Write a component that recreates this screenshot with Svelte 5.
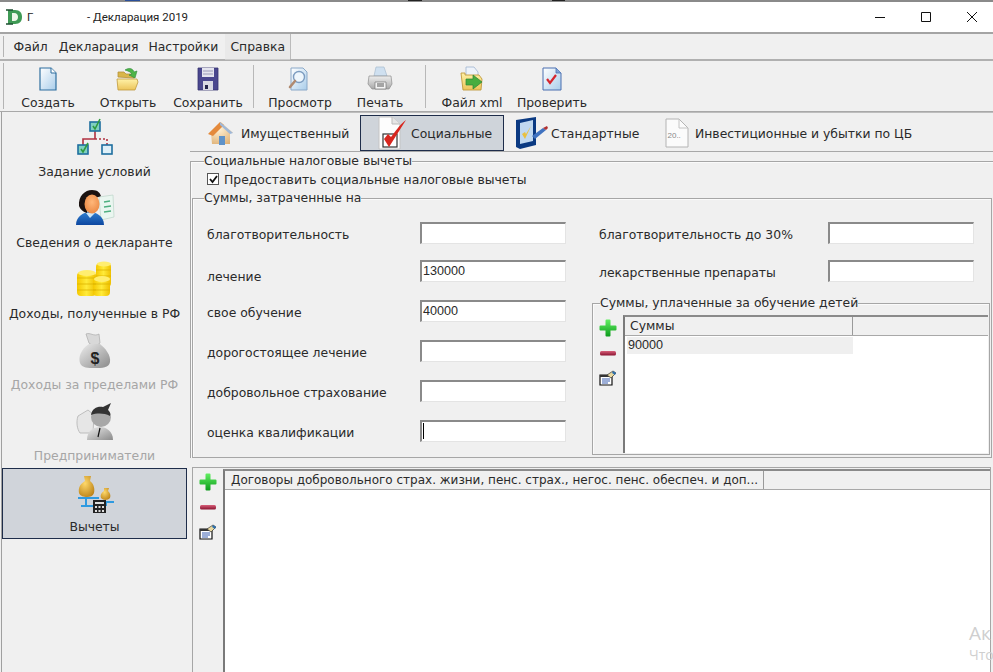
<script>
  const toolA = [{ l: 'Создать', i: 'create' }, { l: 'Открыть', i: 'open' }, { l: 'Сохранить', i: 'save' }];
  const toolB = [{ l: 'Просмотр', i: 'preview' }, { l: 'Печать', i: 'print' }];
  const toolC = [{ l: 'Файл xml', i: 'xml' }, { l: 'Проверить', i: 'check' }];
  const side = [
    { l: 'Задание условий', i: 'tree' },
    { l: 'Сведения о декларанте', i: 'person' },
    { l: 'Доходы, полученные в РФ', i: 'coins' },
    { l: 'Доходы за пределами РФ', i: 'bag', off: true },
    { l: 'Предприниматели', i: 'biz', off: true },
    { l: 'Вычеты', i: 'scales', sel: true }
  ];
  const left = [
    { l: 'благотворительность', v: '' },
    { l: 'лечение', v: '130000', low: true },
    { l: 'свое обучение', v: '40000' },
    { l: 'дорогостоящее лечение', v: '' },
    { l: 'добровольное страхование', v: '' },
    { l: 'оценка квалификации', v: '', caret: true }
  ];
</script>

{#snippet tool(t)}
  <div class="tool">
    <svg width="32" height="26" viewBox="0 0 32 26">{@render icon(t.i)}</svg>
    <span>{t.l}</span>
  </div>
{/snippet}

{#snippet icon(n)}
  {#if n === 'create'}
    <path d="M8 2h11l5 5v17H8z" fill="url(#gPage)" stroke="#2f6f9f" stroke-width="1.2"/>
    <path d="M19 2v5h5" fill="#fff" stroke="#2f6f9f"/>
  {:else if n === 'open'}
    <path d="M6 11V6h6l2 2h8v4z" fill="#d9b64a" stroke="#b5923a" stroke-width=".8"/>
    <path d="M6 24l-1-11h20l1 3-3 8z" fill="url(#gFolder)" stroke="#c09a3c" stroke-width=".8"/>
    <path d="M13 4c5-3 8-1 9 2l3-1-2 7-6-3 3-1c-1-2-4-3-7-4z" fill="#4fb548" stroke="#2d8a3a" stroke-width=".6"/>
  {:else if n === 'save'}
    <path d="M6 2h20v22H6z" fill="#4a478f" stroke="#35336e" stroke-width=".8"/>
    <path d="M10 2h12v9H10z" fill="#e4e4ee"/>
    <path d="M11 5h10M11 8h10" stroke="#9a9ab8"/>
    <path d="M11 15h10v9H11z" fill="#d8d8e4"/>
    <path d="M13 19h3v4h-3z" fill="#23234a"/>
  {:else if n === 'preview'}
    <path d="M7 2h12l4 4v18H7z" fill="url(#gPage)" stroke="#8aa8c8"/>
    <circle cx="15" cy="11" r="5.500" fill="#eef6fc" stroke="#7c9cc0" stroke-width="1.400"/>
    <path d="M11 15l-5 6" stroke="#b08a70" stroke-width="2.600" stroke-linecap="round"/>
  {:else if n === 'print'}
    <path d="M10 10l2-9h8l3 9z" fill="#cfe0f0" stroke="#a8bccf" stroke-width=".7"/>
    <path d="M5 10h22l1 8-3 5H8l-4-5z" fill="url(#gGray)" stroke="#8c8c8c" stroke-width=".7"/>
    <path d="M11 16h11v7H11z" fill="#f4f4f4" stroke="#777" stroke-width=".7"/>
    <path d="M13 18h7M13 20h7" stroke="#555"/>
  {:else if n === 'xml'}
    <path d="M10 1h8l4 5v8H10z" fill="#eef3fa" stroke="#9fb4cf" stroke-width=".8"/>
    <path d="M5 7h4v2h14l3 4-1 11H7z" fill="url(#gFolder)" stroke="#c09a3c" stroke-width=".9"/>
    <path d="M10 13h7v-4l9 7-9 7v-4h-7z" fill="#47ad3f" stroke="#2b8436" stroke-width=".7"/>
  {:else if n === 'check'}
    <path d="M7 2h13l5 5v17H7z" fill="url(#gPage)" stroke="#4a6fb0" stroke-width="1"/>
    <path d="M20 2v5h5" fill="#7fa2d8" stroke="#4a6fb0" stroke-width=".8"/>
    <path d="M11 13l3 4 6-8" fill="none" stroke="#d6262e" stroke-width="2.200"/>
  {/if}
{/snippet}

{#snippet actions()}
  <div class="actions">
    <svg width="18" height="18" viewBox="0 0 18 18"><path d="M6.500 1.500q0-1 1-1h3q1 0 1 1v5h5q1 0 1 1v3q0 1-1 1h-5v5q0 1-1 1h-3q-1 0-1-1v-5h-5q-1 0-1-1v-3q0-1 1-1h5z" fill="url(#gPlus)"/></svg>
    <svg width="18" height="18" viewBox="0 0 18 18"><rect x="1" y="7" width="16" height="4.500" rx="1.500" fill="url(#gMinus)"/></svg>
    <svg width="18" height="18" viewBox="0 0 18 18">
      <path d="M1 6h12v10H1z" fill="#fff" stroke="#111" stroke-width="1.200"/>
      <path d="M1 6h12v2H1z" fill="#333"/>
      <path d="M3 10h8M3 12h8M3 14h6" stroke="#3a5fb0"/>
      <path d="M8 6l6-4 3 2-5 5z" fill="#e9d9a0" stroke="#333" stroke-width=".7"/>
      <path d="M14 2l3 2-1 2-3-2z" fill="#2c6fae"/>
    </svg>
  </div>
{/snippet}

<div class="win">
  <svg class="defs" width="0" height="0">
    <defs>
      <linearGradient id="gPage" x1="0" y1="0" x2="1" y2="1"><stop offset="0" stop-color="#ffffff"/><stop offset="1" stop-color="#a9cdea"/></linearGradient>
      <linearGradient id="gFolder" x1="0" y1="0" x2="0" y2="1"><stop offset="0" stop-color="#fff2a8"/><stop offset="1" stop-color="#ecc45a"/></linearGradient>
      <linearGradient id="gGray" x1="0" y1="0" x2="0" y2="1"><stop offset="0" stop-color="#eeeeee"/><stop offset="1" stop-color="#a8a8a8"/></linearGradient>
      <linearGradient id="gPlus" x1="0" y1="0" x2="0" y2="1"><stop offset="0" stop-color="#62f062"/><stop offset="1" stop-color="#0c9a1c"/></linearGradient>
      <linearGradient id="gMinus" x1="0" y1="0" x2="0" y2="1"><stop offset="0" stop-color="#d8607a"/><stop offset="1" stop-color="#8a1230"/></linearGradient>
      <linearGradient id="gCoin" x1="0" y1="0" x2="1" y2="0"><stop offset="0" stop-color="#f5c800"/><stop offset=".5" stop-color="#ffeb3a"/><stop offset="1" stop-color="#efc000"/></linearGradient>
      <linearGradient id="gBlue" x1="0" y1="0" x2="0" y2="1"><stop offset="0" stop-color="#2f7fd0"/><stop offset="1" stop-color="#0d47a0"/></linearGradient>
      <linearGradient id="gBagG" x1="0" y1="0" x2="1" y2="1"><stop offset="0" stop-color="#ededed"/><stop offset="1" stop-color="#8a8a8a"/></linearGradient>
      <radialGradient id="gGold" cx=".4" cy=".35" r=".8"><stop offset="0" stop-color="#ffd96a"/><stop offset="1" stop-color="#b5790f"/></radialGradient>
      <radialGradient id="gFace" cx=".5" cy=".4" r=".7"><stop offset="0" stop-color="#ffb77a"/><stop offset="1" stop-color="#e8823c"/></radialGradient>
      <radialGradient id="gHouse" cx=".4" cy=".3" r=".9"><stop offset="0" stop-color="#fff3d8"/><stop offset="1" stop-color="#dba868"/></radialGradient>
    </defs>
  </svg>

  <header class="title">
    <svg class="logo" width="18" height="18" viewBox="0 0 18 18">
      <path d="M3 2h7c5 0 7 3 7 7s-2 7-7 7H3z" fill="#3f9a55"/>
      <path d="M7 5h2c3 0 4 2 4 4s-1 4-4 4H7z" fill="#eef6e8"/>
      <path d="M1 2h7M1 16h7" stroke="#1c4f30" stroke-width="1.500"/>
    </svg>
    <span class="t1">Г</span>
    <span class="t2">- Декларация 2019</span>
    <div class="ctl">
      <svg width="12" height="12" viewBox="0 0 12 12"><path d="M1 6.500h10" stroke="#111"/></svg>
      <svg width="12" height="12" viewBox="0 0 12 12"><path d="M1.500 1.500h9v9h-9z" fill="none" stroke="#111"/></svg>
      <svg width="12" height="12" viewBox="0 0 12 12"><path d="M1 1l10 10M11 1L1 11" stroke="#111"/></svg>
    </div>
  </header>

  <nav class="menu">
    <i class="grip"></i>
    <span>Файл</span><span>Декларация</span><span>Настройки</span><span class="hot">Справка</span>
  </nav>

  <div class="toolbar">
    <i class="grip"></i>
    {#each toolA as t}{@render tool(t)}{/each}
    <i class="sep"></i>
    {#each toolB as t}{@render tool(t)}{/each}
    <i class="sep"></i>
    {#each toolC as t}{@render tool(t)}{/each}
  </div>

  <div class="body">
    <aside class="side">
      {#each side as s}
        <div class="item" class:sel={s.sel} class:off={s.off}>
          <svg width="40" height="40" viewBox="0 0 40 40">
            {#if s.i === 'tree'}
              <path d="M20 13v8M8 27v-6h12" fill="none" stroke="#b03040" stroke-width="1.600"/>
              <path d="M20 21h12v6" fill="none" stroke="#b03040" stroke-width="1.600" stroke-dasharray="2 2"/>
              <rect x="15" y="4" width="10" height="9" fill="#7fd0c0" stroke="#1f6f9f" stroke-width="1.600"/>
              <rect x="3" y="27" width="10" height="9" fill="#7fd0c0" stroke="#1f6f9f" stroke-width="1.600"/>
              <rect x="27" y="27" width="10" height="9" fill="#dff0f8" stroke="#1f6f9f" stroke-width="1.600"/>
              <path d="M18 8l2 3 5-10" fill="none" stroke="#2f9a3f" stroke-width="1.600"/>
              <path d="M6 31l2 3 5-9" fill="none" stroke="#2f9a3f" stroke-width="1.600"/>
            {:else if s.i === 'person'}
              <path d="M24 8l14-2 1 22-13 3z" fill="#eaf6f0" stroke="#bcd4c8" stroke-width=".7"/>
              <path d="M29 13l6-1M29 18l7-1M29 23l7-1" stroke="#4fb080" stroke-width="1.400"/>
              <path d="M1 36c0-9 8-13 14-13s14 4 14 13z" fill="url(#gBlue)"/>
              <path d="M11 24l4 5 5-5z" fill="#cfe6f5"/>
              <path d="M4 17C3 7 10 1 17 1c6 0 8 3 9 6-4 2-8 2-11 1l-3 16c-4-1-7-4-8-7z" fill="#1b1210"/>
              <ellipse cx="17" cy="15" rx="7.500" ry="9.500" fill="url(#gFace)"/>
            {:else if s.i === 'coins'}
              <rect x="2" y="12" width="19" height="24" rx="4" fill="url(#gCoin)"/>
              <rect x="21" y="3" width="15" height="24" rx="4" fill="url(#gCoin)"/>
              <rect x="18" y="18" width="17" height="18" rx="4" fill="url(#gCoin)"/>
              <path d="M2 18h19M2 24h19M2 30h19M21 10h15M21 16h15M18 24h17M18 30h17" stroke="#dcb400" stroke-width=".8"/>
              <ellipse cx="12" cy="13" rx="9" ry="3" fill="#ffee70"/><ellipse cx="29" cy="4" rx="7" ry="2.500" fill="#ffee70"/><ellipse cx="27" cy="19" rx="8" ry="3" fill="#ffee70"/>
            {:else if s.i === 'bag'}
              <path d="M11 3c4-2 8 3 13 0l1 9c-3 3-8 3-11 0z" fill="#d8d8d8" stroke="#aaa" stroke-width=".7"/>
              <path d="M14 13c-8 5-11 13-9 19 2 5 8 5 15 5s14 0 15-6c1-7-5-14-10-18z" fill="url(#gBagG)"/>
              <text x="20" y="33" text-anchor="middle" font-family="Liberation Sans" font-weight="700" font-size="16" fill="#222">$</text>
            {:else if s.i === 'biz'}
              <path d="M3 14l10-6 6 5-1 18H5c-3-4-4-11-2-17z" fill="#e6e6e6" stroke="#aaa" stroke-width=".7"/>
              <path d="M12 38c0-10 7-13 13-13s13 4 13 13z" fill="url(#gBagG)"/>
              <path d="M25 26l-2 9" stroke="#111" stroke-width="1.200"/>
              <circle cx="26" cy="15" r="10" fill="#a8a8a8"/>
              <path d="M16 13c1-7 7-9 12-8l8-4-3 7c2 2 3 4 2 6-6-3-13-3-19-1z" fill="#333"/>
            {:else}
              <path d="M9 3h7l-1 5c4 3 5 8 4 12-1 3-4 4-7 4s-7-1-8-4c-1-5 1-9 6-12z" fill="url(#gGold)"/>
              <path d="M29 15h5l-1 3c2 2 3 4 2 7-1 1-3 2-4.500 2S27 26 26 25c-1-3 0-5 3-7z" fill="url(#gGold)"/>
              <path d="M3 25h21M22 29h17M11 25v8M6 33h12M31 28v5" fill="none" stroke="#2f9ae0" stroke-width="2"/>
              <rect x="18" y="27" width="13" height="14" fill="#222" />
              <path d="M20 29h9v2h-9zM20 33h2v2h-2zM23.500 33h2v2h-2zM27 33h2v2h-2zM20 37h2v2h-2zM23.500 37h2v2h-2zM27 37h2v2h-2z" fill="#ddd"/>
            {/if}
          </svg>
          <span>{s.l}</span>
        </div>
      {/each}
    </aside>

    <main class="main">
      <div class="tabs">
        <div class="tab house">
          <svg width="30" height="30" viewBox="0 0 30 30">
            <path d="M5 15l-2 0L15 4l12 11h-3v11H6z" fill="url(#gHouse)"/>
            <path d="M2 16L14 4l4 3-11 11z" fill="#e48a3c"/>
            <path d="M14 4l13 11-3 1-10-9z" fill="#9fb8d8"/>
            <path d="M13 18h6v9h-6z" fill="#5f92c8"/>
          </svg>
          <span>Имущественный</span>
        </div>
        <div class="tab soc on">
          <svg width="38" height="34" viewBox="0 0 38 34">
            <path d="M6 1h13l8 7v25H6z" fill="#fdfdfd" stroke="#c4c4c4"/>
            <path d="M19 1v7h8" fill="#e6e6e6" stroke="#bbb"/>
            <rect x="10" y="18" width="14" height="13" fill="#fff" stroke="#333" stroke-width="1.200"/>
            <path d="M11 23l5 8L33 4c-6 4-11 12-15 17l-3-3z" fill="#d8271f"/>
          </svg>
          <span>Социальные</span>
        </div>
        <div class="tab std">
          <svg width="34" height="34" viewBox="0 0 34 34">
            <path d="M1 4l20-3v28L5 33l-4-2z" fill="#0b3a82"/>
            <path d="M5 7l13-3v21L5 28z" fill="#c0d8f0"/>
            <path d="M7 18l3 5 6-13-5 8-1-2z" fill="#e8c040"/>
            <path d="M17 20l11-8 3 2-11 9z" fill="#3f72c0"/>
            <path d="M28 12l4-2 1 2-2 2z" fill="#b03030"/>
          </svg>
          <span>Стандартные</span>
        </div>
        <div class="tab inv">
          <svg width="24" height="30" viewBox="0 0 24 30">
            <path d="M1 1h13l9 9v19H1z" fill="#fbfbfb" stroke="#b4b4b4"/>
            <path d="M14 1v9h9" fill="none" stroke="#c4c4c4"/>
            <text x="2.500" y="20" font-family="Liberation Sans" font-size="8" fill="#888">20..</text>
          </svg>
          <span>Инвестиционные и убытки по ЦБ</span>
        </div>
      </div>

      <fieldset class="social">
        <legend>Социальные налоговые вычеты</legend>
        <label class="chk">
          <span class="box"><svg width="9" height="9" viewBox="0 0 9 9"><path d="M1 4l2.500 3L8 1" fill="none" stroke="#111" stroke-width="1.800"/></svg></span>
          Предоставить социальные налоговые вычеты
        </label>

        <fieldset class="sums">
          <legend>Суммы, затраченные на</legend>
          <div class="cols">
            <div class="col-l">
              {#each left as f}
                <div class="row" class:low={f.low}>
                  <span class="lab">{f.l}</span>
                  <div class="inp">{f.v}{#if f.caret}<b class="caret"></b>{/if}</div>
                </div>
              {/each}
            </div>
            <div class="col-r">
              <div class="row r"><span class="lab">благотворительность до 30%</span><div class="inp"></div></div>
              <div class="row r"><span class="lab">лекарственные препараты</span><div class="inp"></div></div>
              <fieldset class="kids">
                <legend>Суммы, уплаченные за обучение детей</legend>
                <div class="gridwrap">
                  {@render actions()}
                  <div class="grid">
                    <div class="ghead"><span class="c1">Суммы</span></div>
                    <div class="gcell">90000</div>
                  </div>
                </div>
              </fieldset>
            </div>
          </div>
        </fieldset>
      </fieldset>

      <section class="contracts">
        {@render actions()}
        <div class="grid big">
          <div class="ghead"><span class="c2">Договоры добровольного страх. жизни, пенс. страх., негос. пенс. обеспеч. и доп...</span></div>
        </div>
      </section>
    </main>
  </div>

  <div class="wm"><span class="w1">Ак</span><span class="w2">Что</span></div>
</div>

<style>
  :global(body) { margin: 0; background: #f0f0f0; }
  .win {
    position: relative;
    width: 993px;
    height: 672px;
    overflow: hidden;
    background: #f0f0f0;
    color: #2a2a2a;
    font-family: "DejaVu Sans", sans-serif;
    font-size: 12.4px;
    display: flex;
    flex-direction: column;
  }
  .defs { display: block; height: 0; width: 0; }

  .title {
    height: 34px;
    flex: none;
    box-sizing: border-box;
    background:
      linear-gradient(90deg, transparent 125px, #2a4f9a 125px, #2a4f9a 140px, transparent 140px) top/100% 1px no-repeat,
      linear-gradient(90deg, transparent 408px, #222 408px, #222 422px, transparent 422px, transparent 552px, #222 552px, #222 565px, transparent 565px) top/100% 1px no-repeat,
      linear-gradient(#8a8a8a, #8a8a8a) top/100% 2px no-repeat,
      #fff;
    border-bottom: 2px solid #a4a4a4;
    display: flex;
    align-items: center;
    padding: 1px 0 0 5px;
    font-family: Roboto, sans-serif;
    font-size: 11.5px;
    color: #222;
  }
  .logo { flex: none; }
  .t1 { margin-left: 4px; width: 60px; }
  .ctl { margin-left: auto; display: flex; gap: 34px; padding-right: 15px; }

  .grip { width: 1px; flex: none; background: #b4b4b4; margin: 2px 0 2px 3px; }

  .menu {
    height: 27px;
    flex: none;
    box-sizing: border-box;
    display: flex;
    align-items: stretch;
    border-bottom: 2px solid #b0b0b0;
  }
  .menu span { padding: 0 5.500px; line-height: 25px; }
  .menu span:nth-of-type(1) { margin-left: 4px; }
  .menu span:nth-of-type(3) { margin-left: -1px; }
  .menu .hot { background: #e9e9e9; box-shadow: 1px 0 0 #bbb, 0 1px 0 #ccc; padding-right: 5px; margin-left: 1px; }

  .toolbar {
    height: 51px;
    flex: none;
    box-sizing: border-box;
    display: flex;
    align-items: stretch;
    border-bottom: 1px solid #a8a8a8;
  }
  .toolbar .grip { margin-right: 4px; }
  .tool { width: 80px; display: flex; flex-direction: column; align-items: center; padding-top: 5px; }
  .tool span { margin-top: 3px; white-space: nowrap; }
  .sep { width: 1px; background: #b8b8b8; margin: 4px 6px 3px 5px; }

  .body { flex: 1; display: flex; min-height: 0; }

  .side { width: 189px; flex: none; padding-top: 1px; box-sizing: border-box; border-left: 1px solid #a0a0a0; margin-left: 1px; margin-right: -1px; flex-basis: 190px; }
  .item {
    height: 71px;
    box-sizing: border-box;
    display: flex;
    flex-direction: column;
    align-items: center;
    padding-top: 5px;
    width: 185px;
  }
  .item span { margin-top: 6px; white-space: nowrap; }
  .item.off span { color: #a6a6a6; }
  .item.sel { background: #d0d4da; border: 1px solid #1e2d4a; padding-top: 4px; }

  .main { flex: 1; min-width: 0; display: flex; flex-direction: column; }

  .tabs {
    height: 40px;
    flex: none;
    box-sizing: border-box;
    border-top: 1px solid #bdbdbd;
    border-bottom: 1px solid #a8a8a8;
    display: flex;
    align-items: flex-end;
  }
  .tab { display: flex; align-items: center; height: 36px; box-sizing: border-box; }
  .house { margin-left: 16px; gap: 5px; width: 154px; }
  .soc { width: 144px; padding-left: 12px; }
  .on { background: #cfd4da; border: 1px solid #1e2d4a; }
  .std { margin-left: 11px; width: 150px; gap: 2px; }
  .inv { gap: 5px; }
  .inv svg { margin-right: 1px; }

  fieldset { margin: 0; padding: 0; border: 1px solid #a6a6a6; min-width: 0; box-shadow: inset 1px 1px 0 #fafafa; }
  legend { padding: 0; line-height: 14px; }
  .social { margin-top: 2px; height: 304px; box-sizing: border-box; padding: 0 1px 0 0; border-width: 1px 0 0 1px; }
  .social > legend { margin-left: 13px; }
  .chk { display: flex; align-items: center; gap: 5px; padding-left: 16px; height: 18px; margin-top: 2px; }
  .box { background: #fff; border: 1px solid #555; display: flex; align-items: center; justify-content: center; box-sizing: border-box; width: 12px; height: 12px; }

  .sums { margin: 3px 0 0 1px; height: 267px; box-sizing: border-box; }
  .sums > legend { margin-left: 11px; }
  .cols { display: flex; }
  .col-l { width: 400px; padding: 17px 0 0 14px; box-sizing: border-box; }
  .col-r { flex: 1; padding: 17px 0 0 6px; min-width: 0; }
  .row { display: flex; height: 22px; margin-bottom: 18px; }
  .row.low .lab { padding-top: 10px; }
  .row:first-child { margin-bottom: 16px; }
  .lab { width: 213px; flex: none; line-height: 14px; padding-top: 6px; white-space: nowrap; }
  .inp {
    width: 146px;
    height: 22px;
    box-sizing: border-box;
    background: #fff;
    border-top: 2px solid #8a8a8a;
    border-left: 2px solid #8a8a8a;
    border-right: 1px solid #e4e4e4;
    border-bottom: 1px solid #e4e4e4;
    padding: 1px 0 0 1px;
    line-height: 16px;
    display: flex;
    font-family: "Liberation Sans", sans-serif;
    font-size: 12.6px;
  }
  .caret { width: 1px; height: 16px; background: #000; display: block; }
  .row.r .lab { width: 229px; }
  .row.r:nth-child(2) { margin-bottom: 14px; }

  .kids { margin: 0 1px 0 -7px; height: 159px; box-sizing: border-box; }
  .kids > legend { margin-left: 7px; }
  .gridwrap { display: flex; height: 138px; padding: 5px 1px 0 0; }
  .actions { width: 30px; flex: none; display: flex; flex-direction: column; align-items: center; gap: 7px; padding-top: 4px; box-sizing: border-box; }
  .grid { flex: 1; min-width: 0; background: #fff; border-left: 2px solid #7a7a7a; border-top: 2px solid #8a8a8a; }
  .ghead { height: 19px; background: #f0f0f0; border-bottom: 1px solid #a8a8a8; display: flex; box-sizing: border-box; }
  .c1 { width: 228px; box-sizing: border-box; padding-left: 5px; line-height: 18px; border-right: 1px solid #9a9a9a; }
  .gcell { width: 226px; margin: 1px 0 0 2px; height: 17px; background: #efefef; line-height: 17px; padding-left: 1px; box-sizing: border-box; font-family: "Liberation Sans", sans-serif; font-size: 12.6px; }

  .contracts { margin: 9px 2px 0 2px; flex: 1; min-height: 0; display: flex; border-top: 1px solid #a6a6a6; border-left: 1px solid #a6a6a6; border-right: 1px solid #a6a6a6; }
  .contracts .actions { padding-top: 5px; }
  .big { margin-top: 1px; }
  .c2 { width: 539px; box-sizing: border-box; padding-left: 6px; line-height: 18px; border-right: 1px solid #9a9a9a; white-space: nowrap; font-size: 12px; }

  .wm { position: absolute; left: 969px; top: 621px; display: flex; flex-direction: column; font-family: "Open Sans", sans-serif; color: #cfcfcf; white-space: nowrap; }
  .w1 { font-size: 19px; line-height: 24px; }
  .w2 { font-size: 14px; line-height: 20px; }
</style>
